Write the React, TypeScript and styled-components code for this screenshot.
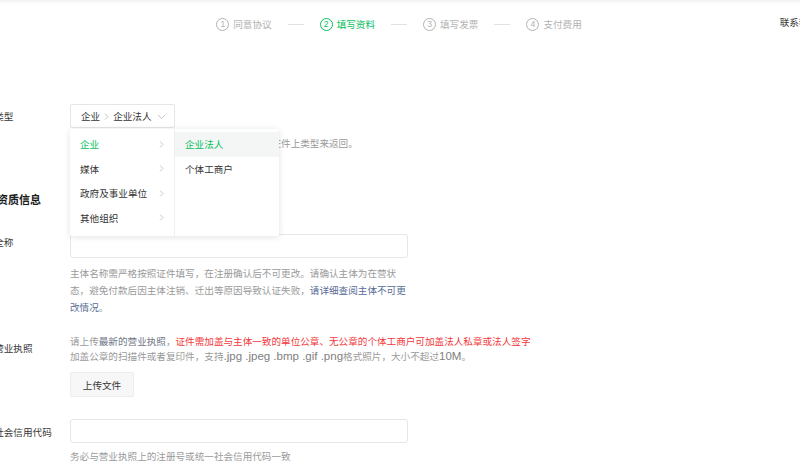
import React from "react";
import styled, { createGlobalStyle } from "styled-components";

const GlobalStyle = createGlobalStyle`
  html, body {
    margin: 0;
    padding: 0;
    background: #ffffff;
    overflow: hidden;
  }
  body {
    font-family: "Noto Sans CJK SC", "Liberation Sans", sans-serif;
    font-size: 9.6px;
    color: #353535;
  }
`;

const Page = styled.div`
  width: 800px;
  height: 475px;
  overflow: hidden;
`;

const Header = styled.header`
  height: 48px;
  display: grid;
  grid-template-columns: 1fr auto 1fr;
  align-items: center;
  background: linear-gradient(#f2f2f2, #ffffff 4px);
`;

const Steps = styled.ol`
  grid-column: 2;
  display: flex;
  align-items: center;
  margin: 0;
  padding: 0;
  list-style: none;
  transform: translateX(-1px);
`;

const Step = styled.li<{ $active?: boolean }>`
  display: flex;
  align-items: center;
  gap: 4px;
  color: ${(p) => (p.$active ? "#07c160" : "#b2b2b2")};
  line-height: 14px;
  white-space: nowrap;
`;

const StepNum = styled.span`
  width: 13px;
  height: 13px;
  box-sizing: border-box;
  border: 1px solid currentColor;
  border-radius: 50%;
  display: flex;
  align-items: center;
  justify-content: center;
  font-size: 8.5px;
  font-family: "Liberation Sans", sans-serif;
`;

const Connector = styled.li`
  width: 16px;
  height: 1px;
  margin: 0 16px;
  background: #e2e2e2;
`;

const Contact = styled.a`
  grid-column: 3;
  justify-self: end;
  margin-right: -18px;
  color: #353535;
  text-decoration: none;
  white-space: nowrap;
  transform: translateY(-2px);
`;

const Form = styled.main`
  margin-left: -25px;
  padding-top: 56px;
`;

const Row = styled.section<{ $top?: number }>`
  display: grid;
  grid-template-columns: 95px 1fr;
  align-items: start;
  margin-top: ${(p) => p.$top ?? 0}px;
`;

const Label = styled.label<{ $pad?: number }>`
  padding-top: ${(p) => p.$pad ?? 0}px;
  line-height: 17px;
  color: #353535;
  white-space: nowrap;
`;

const Field = styled.div`
  display: flex;
  flex-direction: column;
  align-items: flex-start;
`;

const SelectWrap = styled.div`
  position: relative;
  z-index: 2;
`;

const Select = styled.div`
  width: 105px;
  height: 24px;
  box-sizing: border-box;
  border: 1px solid #e6e6e6;
  border-radius: 2px;
  display: flex;
  align-items: center;
  padding: 0 8px 0 10px;
  color: #353535;
  background: #fff;
`;

const SelectValue = styled.span`
  display: flex;
  align-items: center;
  gap: 4px;
  flex: 1;
`;

const Cascader = styled.div`
  position: absolute;
  top: calc(100% + 1px);
  left: 0;
  display: flex;
  height: 107px;
  background: #fff;
  box-shadow: 0 1px 6px rgba(0, 0, 0, 0.12);
  border-radius: 2px;
`;

const Column = styled.ul<{ $divider?: boolean }>`
  width: 104px;
  margin: 0;
  padding: 3px 0 0;
  list-style: none;
  border-right: ${(p) => (p.$divider ? "1px solid #efefef" : "none")};
`;

const Option = styled.li<{ $active?: boolean; $current?: boolean }>`
  height: 24.5px;
  display: flex;
  align-items: center;
  justify-content: space-between;
  padding: 0 10px;
  color: ${(p) => (p.$active ? "#07c160" : "#353535")};
  background: ${(p) => (p.$current ? "#f4f6f5" : "transparent")};
  white-space: nowrap;
`;

const Hint = styled.p<{ $top?: number; $width?: number }>`
  margin: ${(p) => p.$top ?? 0}px 0 0;
  line-height: 17px;
  color: #9a9a9a;
  width: ${(p) => (p.$width ? `${p.$width}px` : "auto")};
  white-space: ${(p) => (p.$width ? "normal" : "nowrap")};
`;

const Link = styled.a`
  color: #576b95;
  text-decoration: none;
`;

const SectionTitle = styled.h2`
  margin: 39px 0 0;
  font-size: 11px;
  font-weight: 700;
  line-height: 17px;
  color: #1a1a1a;
`;

const Input = styled.input`
  width: 338px;
  height: 24px;
  box-sizing: border-box;
  border: 1px solid #e6e6e6;
  border-radius: 3px;
  outline: none;
  padding: 0 8px;
  font: inherit;
`;

const Notice = styled.p`
  margin: 0;
  line-height: 15px;
  color: #9a9a9a;
  white-space: nowrap;
`;

const Strong = styled.span`
  color: #6d7585;
`;

const Warn = styled.span`
  color: #f2383b;
`;

const Latin = styled.span`
  font-family: "Liberation Sans", sans-serif;
  font-size: 11.5px;
  color: #808080;
`;

const Button = styled.button`
  margin-top: 8px;
  width: 64px;
  height: 25px;
  box-sizing: border-box;
  border: 1px solid #ececec;
  border-radius: 2px;
  background: #f7f7f7;
  color: #353535;
  font: inherit;
  padding: 0;
`;

const Chevron = ({ dir, color, size = 7 }: { dir: "down" | "right"; color: string; size?: number }) =>
  dir === "down" ? (
    <svg width={size + 2} height={size} viewBox="0 0 9 7" fill="none">
      <path d="M1 2l3.5 3.5L8 2" stroke={color} strokeWidth="1" />
    </svg>
  ) : (
    <svg width={size - 2} height={size} viewBox="0 0 5 7" fill="none">
      <path d="M1 0.5l3 3-3 3" stroke={color} strokeWidth="1" />
    </svg>
  );

const steps = ["同意协议", "填写资料", "填写发票", "支付费用"];
const circled = ["1", "2", "3", "4"];

const orgTypes = ["企业", "媒体", "政府及事业单位", "其他组织"];
const subTypes = ["企业法人", "个体工商户"];

export default function App() {
  return (
    <Page>
      <GlobalStyle />
      <Header>
        <Steps>
          {steps.map((s, i) => (
            <React.Fragment key={s}>
              {i > 0 && <Connector />}
              <Step $active={i === 1}>
                <StepNum>{circled[i]}</StepNum>
                {s}
              </Step>
            </React.Fragment>
          ))}
        </Steps>
        <Contact href="#">联系我们</Contact>
      </Header>

      <Form>
        <Row>
          <Label $pad={3.5}>主体类型</Label>
          <Field>
            <SelectWrap>
              <Select>
                <SelectValue>
                  企业
                  <Chevron dir="right" color="#c4c4c4" />
                  企业法人
                </SelectValue>
                <Chevron dir="down" color="#c4c4c4" />
              </Select>
              <Cascader>
                <Column $divider>
                  {orgTypes.map((t, i) => (
                    <Option key={t} $active={i === 0}>
                      {t}
                      <Chevron dir="right" color="#c8c8c8" />
                    </Option>
                  ))}
                </Column>
                <Column>
                  {subTypes.map((t, i) => (
                    <Option key={t} $active={i === 0} $current={i === 0}>
                      {t}
                    </Option>
                  ))}
                </Column>
              </Cascader>
            </SelectWrap>
            <Hint $top={6.5}>主体类型一经选择后不可更改，如有疑问请按照证件上类型来返回。</Hint>
          </Field>
        </Row>

        <SectionTitle>主体资质信息</SectionTitle>

        <Row $top={26.5}>
          <Label>主体全称</Label>
          <Field>
            <Input />
            <Hint $top={7} $width={340}>
              主体名称需严格按照证件填写，在注册确认后不可更改。请确认主体为在营状态，避免付款后因主体注销、迁出等原因导致认证失败，
              <Link href="#">请详细查阅主体不可更改情况</Link>。
            </Hint>
          </Field>
        </Row>

        <Row $top={18}>
          <Label $pad={6}>上传营业执照</Label>
          <Field>
            <Notice>
              请上传<Strong>最新的营业执照</Strong>，
              <Warn>证件需加盖与主体一致的单位公章、无公章的个体工商户可加盖法人私章或法人签字</Warn>
            </Notice>
            <Notice>
              加盖公章的扫描件或者复印件，支持<Latin>.jpg .jpeg .bmp .gif .png</Latin>格式照片，大小不超过
              <Latin>10M</Latin>。
            </Notice>
            <Button type="button">上传文件</Button>
          </Field>
        </Row>

        <Row $top={22}>
          <Label $pad={5}>统一社会信用代码</Label>
          <Field>
            <Input />
            <Hint $top={4.5}>务必与营业执照上的注册号或统一社会信用代码一致</Hint>
          </Field>
        </Row>
      </Form>
    </Page>
  );
}
